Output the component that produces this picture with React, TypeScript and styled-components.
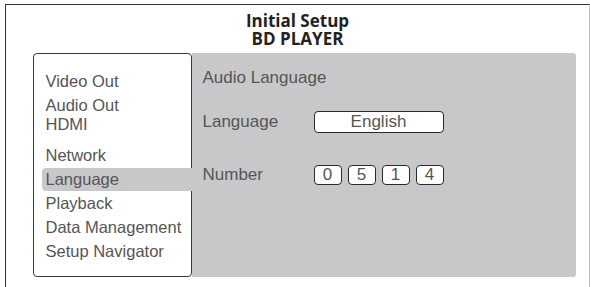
import React from 'react';
import styled, { createGlobalStyle } from 'styled-components';

const GlobalStyle = createGlobalStyle`
  html, body {
    margin: 0;
    padding: 0;
    background: #ffffff;
  }
  body {
    font-family: "Liberation Sans", Arial, sans-serif;
    overflow: hidden;
  }
`;

const Page = styled.div`
  padding: 4px 0 0 5px;
  height: 287px;
  box-sizing: border-box;
  overflow: hidden;
`;

const Frame = styled.div`
  width: 585px;
  height: 283px;
  box-sizing: border-box;
  border-top: 1.5px solid #333;
  border-left: 1.5px solid #333;
  border-right: 1px solid #c4c4c4;
  display: flex;
  flex-direction: column;
`;

const Title = styled.div`
  padding-top: 7px;
  text-align: center;
  font-family: "Open Sans", "Liberation Sans", sans-serif;
  font-weight: 700;
  font-size: 17px;
  line-height: 18px;
  color: #222;
`;

const Body = styled.div`
  display: flex;
  margin-top: 4.5px;
  padding-left: 26.5px;
  padding-right: 13px;
  height: 224px;
`;

const Menu = styled.div`
  width: 159px;
  flex: none;
  box-sizing: border-box;
  border: 1.5px solid #3a3a3a;
  border-radius: 4px;
  padding-top: 15px;
  background: #fff;
`;

const MenuItem = styled.div<{ $active?: boolean; $nudge?: number }>`
  height: 23px;
  line-height: 23px;
  margin: ${p => 1 + (p.$nudge || 0)}px ${p => (p.$active ? '-1.5px' : '0')} ${p => 1 - (p.$nudge || 0)}px 8px;
  padding-left: 4px;
  font-size: 16.5px;
  color: #555;
  white-space: nowrap;
  background: ${p => (p.$active ? '#c8c8ca' : 'transparent')};
  border-radius: 4px 0 0 4px;
`;

const Panel = styled.div`
  flex: 1;
  background: #c8c8ca;
  border-radius: 0 3px 3px 0;
  padding: 16px 11px;
  color: #555;
  font-size: 17px;
`;

const Heading = styled.div`
  line-height: 18px;
  height: 18px;
`;

const Row = styled.div<{ $gap: number; $height: number }>`
  display: flex;
  align-items: center;
  margin-top: ${p => p.$gap}px;
  height: ${p => p.$height}px;
`;

const Label = styled.div`
  width: 111px;
  flex: none;
`;

const ValueBox = styled.div<{ $width: number; $height: number }>`
  width: ${p => p.$width}px;
  height: ${p => p.$height}px;
  box-sizing: border-box;
  border: 1.5px solid #2a2a2a;
  border-radius: 4px;
  background: #fff;
  display: flex;
  align-items: center;
  justify-content: center;
  color: #555;
  font-size: 17px;
`;

const Digits = styled.div`
  display: flex;
  gap: 6px;
`;

const items = [
  { label: 'Video Out' },
  { label: 'Audio Out', nudge: -1 },
  { label: 'HDMI', nudge: -7 },
  { label: 'Network' },
  { label: 'Language', active: true },
  { label: 'Playback' },
  { label: 'Data Management' },
  { label: 'Setup Navigator' },
];

export default function App() {
  return (
    <>
      <GlobalStyle />
      <Page>
        <Frame>
          <Title>
            <div>Initial Setup</div>
            <div>BD PLAYER</div>
          </Title>
          <Body>
            <Menu>
              {items.map(it => (
                <MenuItem key={it.label} $active={it.active} $nudge={it.nudge}>
                  {it.label}
                </MenuItem>
              ))}
            </Menu>
            <Panel>
              <Heading>Audio Language</Heading>
              <Row $gap={24} $height={22}>
                <Label>Language</Label>
                <ValueBox $width={130} $height={22}>English</ValueBox>
              </Row>
              <Row $gap={32} $height={20}>
                <Label>Number</Label>
                <Digits>
                  {['0', '5', '1', '4'].map((d, i) => (
                    <ValueBox key={i} $width={28} $height={20}>{d}</ValueBox>
                  ))}
                </Digits>
              </Row>
            </Panel>
          </Body>
        </Frame>
      </Page>
    </>
  );
}
